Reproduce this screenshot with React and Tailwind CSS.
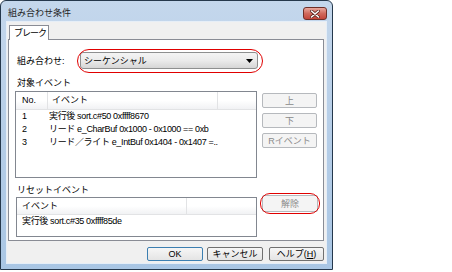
import React from 'react';

const Btn = ({ children, className = '' }) => (
  <div
    className={`flex items-center justify-center rounded-[2px] border bg-gradient-to-b from-[#f6f6f6] to-[#e4e4e4] ${className}`}
  >
    {children}
  </div>
);

const DisabledBtn = ({ children, className = '' }) => (
  <div
    className={`flex items-center justify-center rounded-[2px] border border-[#b6b9bd] bg-[#f4f4f4] text-[#8a8a8a] ${className}`}
  >
    {children}
  </div>
);

const App = () => {
  return (
    <div className="w-[452px] h-[272px] bg-white text-[9px] leading-[12px] text-black font-[family-name:Liberation_Sans,Noto_Sans_CJK_JP,sans-serif]">
      {/* window frame */}
      <div className="w-[333px] h-[270px] flex flex-col border border-[#25384c] rounded-t-[6px] bg-gradient-to-b from-[#c4d7ec] via-[#b5cde7] to-[#a9c6e4] px-[5px] pb-[5px]">
        {/* title bar */}
        <div className="h-[20px] flex items-start">
          <span className="mt-[6px] ml-[2px] text-[#1e1e1e]">組み合わせ条件</span>
          <div className="ml-auto mt-[6px] w-[24px] h-[13px] rounded-[3px] border border-[#6e2f28] bg-gradient-to-b from-[#e9a89e] via-[#d0695c] to-[#c4453a] flex items-center justify-center">
            <svg width="10" height="8" viewBox="0 0 10 8">
              <path d="M1.5 1 L8.5 7 M8.5 1 L1.5 7" stroke="#5a2520" strokeWidth="3" strokeLinecap="round" />
              <path d="M1.5 1 L8.5 7 M8.5 1 L1.5 7" stroke="#ffffff" strokeWidth="1.6" strokeLinecap="round" />
            </svg>
          </div>
        </div>

        {/* client area */}
        <div className="flex-1 flex flex-col bg-[#f0f0f0] border border-[#e6eef7]">
          {/* tab strip */}
          <div className="h-[17px] pt-[3px] pl-[2px] flex">
            <div className="relative z-10 h-[15px] w-[40px] bg-white border border-b-0 border-[#898c95] pl-[4px] leading-[14px] whitespace-nowrap tracking-[-1px] overflow-hidden">
              ブレーク
            </div>
          </div>

          {/* tab panel */}
          <div className="h-[202px] ml-[1px] mr-[2px] bg-white border border-[#898c95] pl-[6px] pt-[12px] flex flex-col">
            {/* combination row */}
            <div className="flex items-center h-[17px]">
              <span className="w-[65px] pl-[2px]">組み合わせ:</span>
              <div className="relative w-[178px] h-[17px]">
                <div className="w-full h-full rounded-[3px] border border-[#8e8f8f] bg-gradient-to-b from-[#f4f4f4] via-[#ebebeb] to-[#d6d6d6] flex items-center pl-[3px] pr-[4px]">
                  <span>シーケンシャル</span>
                  <svg className="ml-auto" width="7" height="4" viewBox="0 0 7 4">
                    <path d="M0 0 H7 L3.5 4 Z" fill="#000" />
                  </svg>
                </div>
                <div className="absolute -left-[3px] -right-[5px] -top-[3px] -bottom-[4px] rounded-[14px] border border-[#e00000]" />
              </div>
            </div>

            {/* target events */}
            <div className="mt-[8px] pl-[2px] h-[13px]">対象イベント</div>
            <div className="mt-[1px] flex items-start">
              <div className="w-[242px] h-[87px] border border-[#828790] bg-white flex flex-col">
                <div className="h-[18px] flex bg-gradient-to-b from-white via-white to-[#f1f2f4] border-b border-[#e2e3e5]">
                  <div className="w-[32px] pl-[6px] border-r border-[#e2e3e5] leading-[17px]">No.</div>
                  <div className="w-[170px] pl-[4px] border-r border-[#e2e3e5] leading-[17px]">イベント</div>
                  <div className="flex-1" />
                </div>
                {[
                  ['1', '実行後 sort.c#50 0xffff8670'],
                  ['2', 'リード e_CharBuf 0x1000 - 0x1000 == 0xb'],
                  ['3', 'リード／ライト e_IntBuf 0x1404 - 0x1407 =..'],
                ].map(([no, ev]) => (
                  <div key={no} className="h-[13px] flex leading-[13px] whitespace-nowrap">
                    <div className="w-[32px] pl-[6px]">{no}</div>
                    <div className="pl-[1px] tracking-[-0.35px]">{ev}</div>
                  </div>
                ))}
              </div>
              <div className="ml-[5px] mt-[2px] flex flex-col gap-[5px]">
                <DisabledBtn className="w-[55px] h-[15px]">上</DisabledBtn>
                <DisabledBtn className="w-[55px] h-[15px]">下</DisabledBtn>
                <DisabledBtn className="w-[55px] h-[15px]">Rイベント</DisabledBtn>
              </div>
            </div>

            {/* reset event */}
            <div className="mt-[6px] pl-[2px] h-[13px]">リセットイベント</div>
            <div className="flex items-start">
              <div className="ml-[1px] w-[241px] h-[40px] border border-[#828790] bg-white flex flex-col">
                <div className="h-[17px] flex bg-gradient-to-b from-white via-white to-[#f1f2f4] border-b border-[#e2e3e5]">
                  <div className="w-[170px] pl-[5px] border-r border-[#e2e3e5] leading-[16px]">イベント</div>
                  <div className="flex-1" />
                </div>
                <div className="h-[13px] pl-[5px] leading-[13px] whitespace-nowrap tracking-[-0.35px]">実行後 sort.c#35 0xffff85de</div>
              </div>
              <div className="relative ml-[5px] -mt-[2px]">
                <DisabledBtn className="w-[56px] h-[17px]">解除</DisabledBtn>
                <div className="absolute -inset-[2px] rounded-[10px] border border-[#e00000]" />
              </div>
            </div>
          </div>

          {/* dialog buttons */}
          <div className="mt-[6px] mr-[2px] flex justify-end">
            <Btn className="w-[56px] h-[14px] mr-[4px] border-[#3c7fb1]">OK</Btn>
            <Btn className="w-[56px] h-[14px] mr-[6px] border-[#707070]">キャンセル</Btn>
            <Btn className="w-[55px] h-[14px] border-[#707070]">
              ヘルプ(<span className="underline">H</span>)
            </Btn>
          </div>
        </div>
      </div>
    </div>
  );
};

export default App;
